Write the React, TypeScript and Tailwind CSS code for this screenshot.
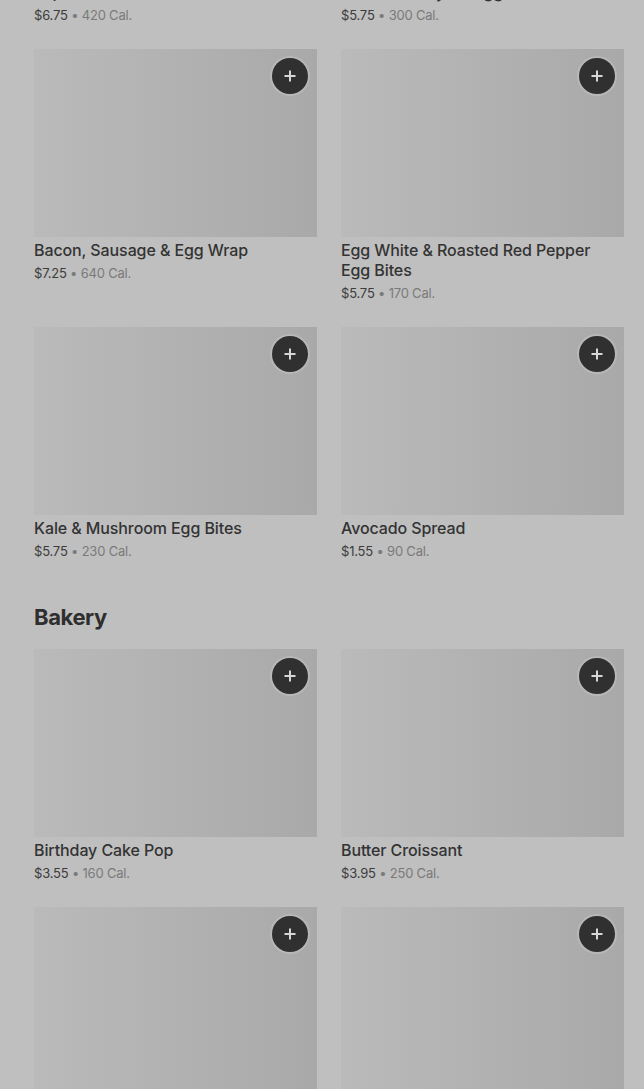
import React from "react";

type Item = { name: string; price: string; cal: string };

const Plus = () => (
  <svg width="14" height="14" viewBox="0 0 14 14" fill="none">
    <path d="M7 1.5v11M1.5 7h11" stroke="#d6d6d6" strokeWidth="2" />
  </svg>
);

const Meta = ({ price, cal }: { price: string; cal: string }) => (
  <div className="mt-[3px] text-[13px] leading-[20px] tracking-[-0.2px]">
    <span className="text-[#3c3c3c]">{price}</span>
    <span className="text-[#7a7a7a]"> • {cal}</span>
  </div>
);

const Card = ({ item }: { item: Item }) => (
  <div className="flex flex-col">
    <div className="relative h-[188px] w-full bg-gradient-to-r from-[#bababa] to-[#a9a9a9]">
      <button className="absolute right-[9px] top-[9px] flex h-[36px] w-[36px] items-center justify-center rounded-full bg-[#303030] shadow-[0_0_0_2px_rgba(210,210,210,0.35)]">
        <Plus />
      </button>
    </div>
    <div className="mt-[3px] pr-[16px] text-[16px] font-medium leading-[20px] tracking-[-0.1px] text-[#333333]">{item.name}</div>
    <Meta price={item.price} cal={item.cal} />
  </div>
);

const rows1: Item[] = [
  { name: "Bacon, Sausage & Egg Wrap", price: "$7.25", cal: "640 Cal." },
  { name: "Egg White & Roasted Red Pepper Egg Bites", price: "$5.75", cal: "170 Cal." },
  { name: "Kale & Mushroom Egg Bites", price: "$5.75", cal: "230 Cal." },
  { name: "Avocado Spread", price: "$1.55", cal: "90 Cal." },
];

const bakery: Item[] = [
  { name: "Birthday Cake Pop", price: "$3.55", cal: "160 Cal." },
  { name: "Butter Croissant", price: "$3.95", cal: "250 Cal." },
  { name: "Chocolate Croissant", price: "$4.25", cal: "300 Cal." },
  { name: "Blueberry Muffin", price: "$3.45", cal: "360 Cal." },
];

export default function App() {
  return (
    <div
      className="h-[1089px] w-[644px] overflow-hidden bg-[#bfbfbf] pl-[34px] pr-[20px]"
      style={{ fontFamily: "Inter, 'Noto Sans', sans-serif" }}
    >
      <div className="mt-[-18px] grid grid-cols-2 gap-x-[24px]">
        <div>
          <div className="text-[16px] font-medium leading-[20px] text-[#333333]">Impossible™ Breakfast Sandwich</div>
          <Meta price="$6.75" cal="420 Cal." />
        </div>
        <div>
          <div className="text-[16px] font-medium leading-[20px] text-[#333333]">Bacon & Gruyère Egg Bites</div>
          <Meta price="$5.75" cal="300 Cal." />
        </div>
      </div>
      <div className="mt-[24px] grid grid-cols-2 gap-x-[24px] gap-y-[24px]">
        {rows1.map((it) => (
          <Card key={it.name} item={it} />
        ))}
      </div>
      <h2 className="mt-[40px] text-[22px] font-bold leading-[32px] tracking-[-0.4px] text-[#2e2e2e]">Bakery</h2>
      <div className="mt-[16px] grid grid-cols-2 gap-x-[24px] gap-y-[24px]">
        {bakery.map((it) => (
          <Card key={it.name} item={it} />
        ))}
      </div>
    </div>
  );
}
